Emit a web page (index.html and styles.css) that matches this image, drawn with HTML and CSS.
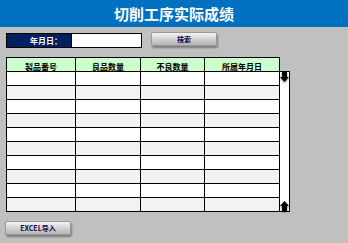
FILE: index.html
```html
<!DOCTYPE html>
<html lang="zh">
<head>
<meta charset="utf-8">
<link rel="stylesheet" href="styles.css">
</head>
<body>
<header class="title-bar"><h1 class="title">切削工序实际成绩</h1></header>
<div class="search-row">
  <div class="date-field">
    <span class="date-label">年月日：</span>
    <span class="date-input"></span>
  </div>
  <button class="btn btn-search">検索</button>
</div>
<div class="table-area">
  <div class="grid">
    <div class="cell head">製品番号</div><div class="cell head">良品数量</div><div class="cell head">不良数量</div><div class="cell head">所属年月日</div>
    <div class="cell"></div><div class="cell"></div><div class="cell"></div><div class="cell"></div>
    <div class="cell alt"></div><div class="cell alt"></div><div class="cell alt"></div><div class="cell alt"></div>
    <div class="cell"></div><div class="cell"></div><div class="cell"></div><div class="cell"></div>
    <div class="cell alt"></div><div class="cell alt"></div><div class="cell alt"></div><div class="cell alt"></div>
    <div class="cell"></div><div class="cell"></div><div class="cell"></div><div class="cell"></div>
    <div class="cell alt"></div><div class="cell alt"></div><div class="cell alt"></div><div class="cell alt"></div>
    <div class="cell"></div><div class="cell"></div><div class="cell"></div><div class="cell"></div>
    <div class="cell alt"></div><div class="cell alt"></div><div class="cell alt"></div><div class="cell alt"></div>
    <div class="cell"></div><div class="cell"></div><div class="cell"></div><div class="cell"></div>
    <div class="cell alt"></div><div class="cell alt"></div><div class="cell alt"></div><div class="cell alt"></div>
  </div>
  <div class="scrollbar">
    <svg class="arrow" width="9" height="10" viewBox="0 0 9 10"><path d="M2 0H7V5H9L4.5 10L0 5H2Z" fill="#000"/></svg>
    <svg class="arrow" width="9" height="10" viewBox="0 0 9 10"><path d="M2 10H7V5H9L4.5 0L0 5H2Z" fill="#000"/></svg>
  </div>
</div>
<button class="btn btn-import">EXCEL导入</button>
</body>
</html>
```
FILE: styles.css
```css
* { box-sizing: border-box; }
html, body { margin: 0; padding: 0; }
body {
  width: 348px;
  height: 243px;
  background: #c0c0c0;
  font-family: "Noto Sans CJK SC", "Noto Sans CJK JP", "Liberation Sans", sans-serif;
  overflow: hidden;
}
.title-bar {
  height: 27px;
  background: #0070c0;
  display: flex;
  align-items: center;
  justify-content: center;
}
.title {
  margin: 0;
  color: #fff;
  font-size: 15px;
  font-weight: 700;
  line-height: 1;
  letter-spacing: 0;
}
.search-row {
  display: flex;
  align-items: flex-start;
  gap: 9px;
  padding-left: 6px;
  margin-top: 5px;
}
.date-field {
  display: flex;
  width: 136px;
  height: 15px;
  margin-top: 1px;
  border: 1px solid #000;
}
.date-label {
  width: 64px;
  background: #002060;
  color: #fff;
  font-size: 8px;
  font-weight: 700;
  line-height: 13px;
  text-align: right;
  padding-right: 9px;
}
.date-input {
  flex: 1;
  background: #fff;
  border-left: 1px solid #000;
}
.btn {
  display: flex;
  align-items: center;
  justify-content: center;
  width: 66px;
  height: 14px;
  padding: 0;
  border: 1px solid #9a9a9a;
  border-radius: 2px;
  background: linear-gradient(#f4f4f4, #d6d6d6 45%, #b4b4b4);
  box-shadow: 1px 2px 2px #7c7c7c;
  color: #101050;
  font-family: "Noto Sans CJK SC", "Noto Sans CJK JP", "Liberation Sans", sans-serif;
  font-size: 7px;
  font-weight: 700;
  line-height: 1;
}
.btn-import { margin: 9px 0 0 5px; }
.table-area {
  display: flex;
  align-items: flex-start;
  margin: 9px 0 0 6px;
}
.grid {
  display: grid;
  grid-template-columns: 69px 65px 64px 75px;
  grid-auto-rows: 14px;
  border-top: 1px solid #000;
  border-left: 1px solid #000;
}
.cell {
  background: #fff;
  border-right: 1px solid #000;
  border-bottom: 1px solid #000;
}
.cell.alt { background: #f2f2f2; }
.cell.head {
  background: #ccffcc;
  font-size: 8px;
  font-weight: 700;
  text-align: center;
  line-height: 1;
  padding-top: 5px;
  color: #000;
}
.scrollbar {
  width: 10px;
  height: 141px;
  margin-top: 14px;
  background: #fff;
  border-top: 1px solid #000;
  border-right: 1px solid #000;
  border-bottom: 1px solid #000;
  display: flex;
  flex-direction: column;
  justify-content: space-between;
  align-items: center;
}
.arrow {
  display: block;
  filter: drop-shadow(0 1px 1px rgba(0,0,0,0.5));
}
```
